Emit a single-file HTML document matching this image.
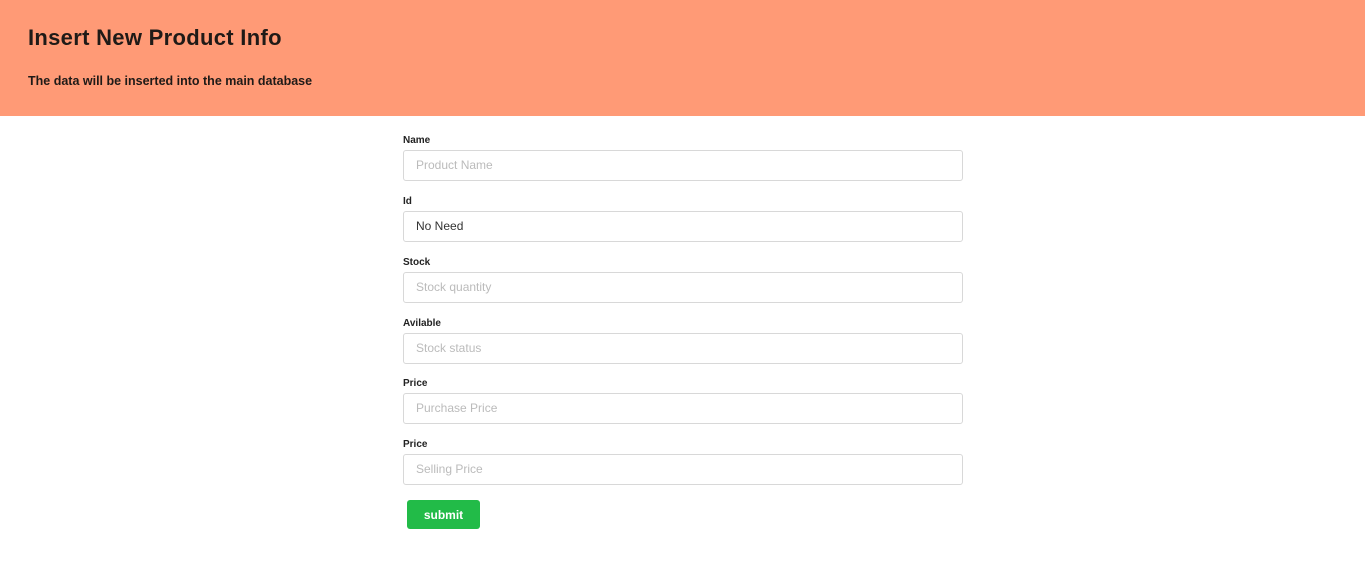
<!DOCTYPE html>
<html><head><style>
*{box-sizing:border-box}
body{margin:0;font-family:"Liberation Sans",sans-serif;background:#fff;width:1365px;height:572px;overflow:hidden}
.hd{background:#ff9a76;height:116px;position:relative;color:#1f1a17}
.hd h1{position:absolute;left:28px;top:25px;margin:0;font-size:22px;font-weight:bold;letter-spacing:.3px}
.hd p{position:absolute;left:28px;top:74px;margin:0;font-size:12.5px;font-weight:bold}
.f{position:absolute;left:403px;width:560px}
.f label{display:block;font-size:10px;font-weight:bold;color:#222;height:14px;line-height:14px;margin-top:1px}
.f div{height:31px;border:1px solid #d8d8d8;border-radius:3px;padding-left:12px;line-height:29px;font-size:12px;color:#bbb;position:absolute;width:560px;top:17px}
.f div.v{color:#333}
.btn{position:absolute;left:407px;top:500px;width:73px;height:29px;background:#22bb48;border-radius:3px;color:#fff;font-weight:bold;font-size:12px;text-align:center;line-height:30px}
</style></head><body>
<div class="hd"><h1>Insert New Product Info</h1><p>The data will be inserted into the main database</p></div>
<div class="f" style="top:133px"><label>Name</label><div>Product Name</div></div>
<div class="f" style="top:194px"><label>Id</label><div class="v">No Need</div></div>
<div class="f" style="top:255px"><label>Stock</label><div>Stock quantity</div></div>
<div class="f" style="top:316px"><label>Avilable</label><div>Stock status</div></div>
<div class="f" style="top:376px"><label>Price</label><div>Purchase Price</div></div>
<div class="f" style="top:437px"><label>Price</label><div>Selling Price</div></div>
<div class="btn">submit</div>
</body></html>
